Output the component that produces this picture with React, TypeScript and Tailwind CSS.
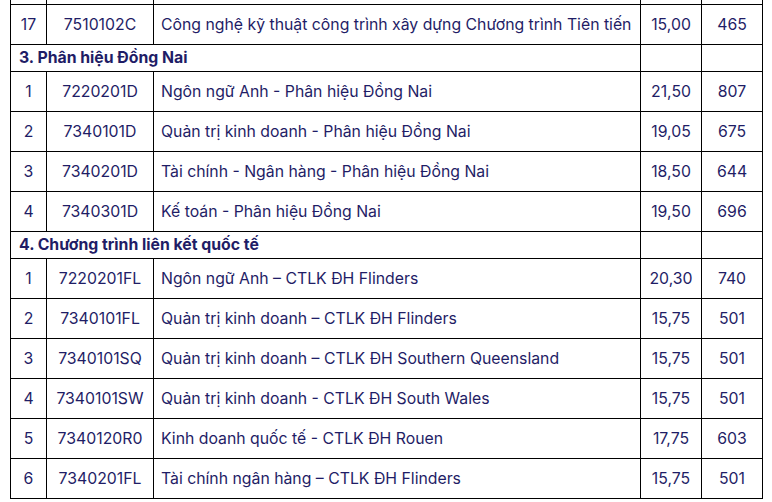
import React from 'react';

type Row = { stt: string; code: string; name: string; score: string; quota: string };
type Section = { title: string };
type Item = Row | Section;

// first row is the tail of the previous page, only its bottom border shows
const items: Item[] = [
  { stt: '', code: '', name: '', score: '', quota: '' },
  { stt: '17', code: '7510102C', name: 'Công nghệ kỹ thuật công trình xây dựng Chương trình Tiên tiến', score: '15,00', quota: '465' },
  { title: '3. Phân hiệu Đồng Nai' },
  { stt: '1', code: '7220201D', name: 'Ngôn ngữ Anh - Phân hiệu Đồng Nai', score: '21,50', quota: '807' },
  { stt: '2', code: '7340101D', name: 'Quản trị kinh doanh - Phân hiệu Đồng Nai', score: '19,05', quota: '675' },
  { stt: '3', code: '7340201D', name: 'Tài chính - Ngân hàng - Phân hiệu Đồng Nai', score: '18,50', quota: '644' },
  { stt: '4', code: '7340301D', name: 'Kế toán - Phân hiệu Đồng Nai', score: '19,50', quota: '696' },
  { title: '4. Chương trình liên kết quốc tế' },
  { stt: '1', code: '7220201FL', name: 'Ngôn ngữ Anh – CTLK ĐH Flinders', score: '20,30', quota: '740' },
  { stt: '2', code: '7340101FL', name: 'Quản trị kinh doanh – CTLK ĐH Flinders', score: '15,75', quota: '501' },
  { stt: '3', code: '7340101SQ', name: 'Quản trị kinh doanh – CTLK ĐH Southern Queensland', score: '15,75', quota: '501' },
  { stt: '4', code: '7340101SW', name: 'Quản trị kinh doanh - CTLK ĐH South Wales', score: '15,75', quota: '501' },
  { stt: '5', code: '7340120R0', name: 'Kinh doanh quốc tế - CTLK ĐH Rouen', score: '17,75', quota: '603' },
  { stt: '6', code: '7340201FL', name: 'Tài chính ngân hàng – CTLK ĐH Flinders', score: '15,75', quota: '501' },
];

const cell = 'border-[1.5px] border-black p-0';

export default function App() {
  return (
    <div className="h-[502px] w-[772px] overflow-hidden bg-white">
      <table
        className="ml-[10px] -mt-[36px] w-[752px] table-fixed border-collapse text-[15.8px] text-[#1f1d66]"
        style={{ fontFamily: 'Inter, "Noto Sans", sans-serif' }}
      >
        <colgroup>
          <col className="w-[36px]" />
          <col className="w-[107px]" />
          <col className="w-[487px]" />
          <col className="w-[61px]" />
          <col className="w-[61px]" />
        </colgroup>
        <tbody>
          {items.map((it, i) =>
            'title' in it ? (
              <tr key={i} className="h-[27px]">
                <td colSpan={3} className={`${cell} pl-[8px] font-bold`}>
                  {it.title}
                </td>
                <td className={cell} />
                <td className={cell} />
              </tr>
            ) : (
              <tr key={i} className="h-[40px]">
                <td className={`${cell} text-center`}>{it.stt}</td>
                <td className={`${cell} text-center`}>{it.code}</td>
                <td className={`${cell} whitespace-nowrap pl-[7px]`}>{it.name}</td>
                <td className={`${cell} text-center`}>{it.score}</td>
                <td className={`${cell} text-center`}>{it.quota}</td>
              </tr>
            )
          )}
        </tbody>
      </table>
    </div>
  );
}
